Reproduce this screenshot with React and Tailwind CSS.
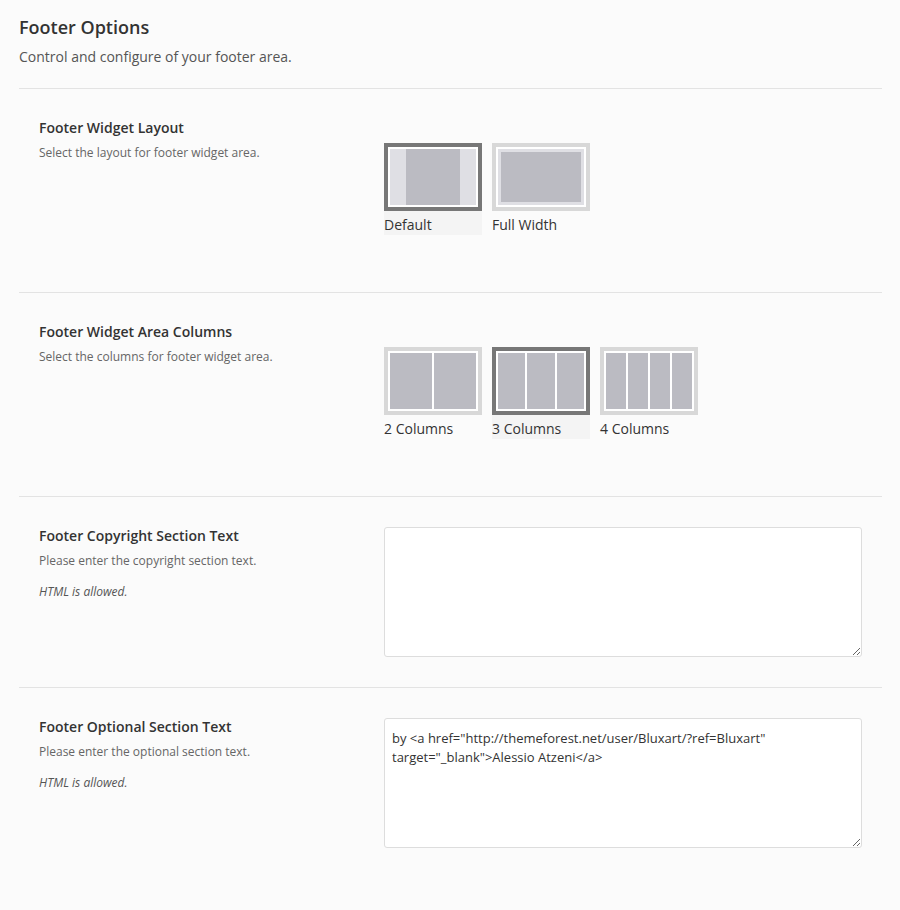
import React from "react"

const font = "font-['Open_Sans','Liberation_Sans',sans-serif]"

function LayoutDefault() {
    return (
        <div className="flex h-full w-full">
            <div className="w-[16px] bg-[#dfdfe4]" />
            <div className="flex-1 bg-[#bbbbc2]" />
            <div className="w-[16px] bg-[#dfdfe4]" />
        </div>
    )
}

function LayoutFull() {
    return (
        <div className="h-full w-full bg-[#dfdfe4] p-[3px]">
            <div className="h-full w-full bg-[#bbbbc2]" />
        </div>
    )
}

function Cols({ n }) {
    return (
        <div className="flex h-full w-full gap-[2px]">
            {Array.from({ length: n }).map((_, i) => (
                <div key={i} className="flex-1 bg-[#bbbbc2]" />
            ))}
        </div>
    )
}

function ImageOption({ label, selected, children }) {
    return (
        <div className="w-[98px]">
            <div className={`h-[68px] w-[98px] border-4 bg-white p-[2px] ${selected ? 'border-[#777777]' : 'border-[#d8d8d8]'}`}>
                {children}
            </div>
            <div className={`h-[24px] text-[14px] leading-[27px] text-[#333] ${selected ? 'bg-[#f4f4f4]' : ''}`}>
                {label}
            </div>
        </div>
    )
}

function Section({ title, desc, note, children, last }) {
    return (
        <div className={`flex px-[20px] py-[30px] ${last ? '' : 'border-b border-[#e3e3e3]'}`}>
            <div className="w-[345px] shrink-0">
                <h3 className="text-[14px] font-semibold leading-[18px] text-[#333]">{title}</h3>
                <p className="mt-[7px] text-[12px] leading-[18px] text-[#666]">{desc}</p>
                {note && <p className="mt-[13px] text-[12px] italic leading-[18px] text-[#555]">{note}</p>}
            </div>
            <div className="flex-1">{children}</div>
        </div>
    )
}

function TextBox({ value }) {
    return (
        <textarea
            defaultValue={value}
            className={`block h-[130px] w-full resize-y rounded-[3px] border border-[#dddddd] bg-white px-[7px] py-[10px] text-[13px] leading-[19px] text-[#333] outline-none ${font}`}
        />
    )
}

export default function App() {
    return (
        <div className={`min-h-screen bg-[#fbfbfb] ${font} text-[#333]`}>
            <div className="ml-[19px] w-[863px] pt-[16px]">
                <div className="border-b border-[#e3e3e3] pb-[21px]">
                    <h2 className="text-[18px] font-semibold leading-[22px] text-[#333]">Footer Options</h2>
                    <p className="mt-[9px] text-[14px] leading-[20px] text-[#555]">Control and configure of your footer area.</p>
                </div>

                <Section title="Footer Widget Layout" desc="Select the layout for footer widget area.">
                    <div className="flex gap-[10px] pt-[24px] pb-[27px]">
                        <ImageOption label="Default" selected>
                            <LayoutDefault />
                        </ImageOption>
                        <ImageOption label="Full Width">
                            <LayoutFull />
                        </ImageOption>
                    </div>
                </Section>

                <Section title="Footer Widget Area Columns" desc="Select the columns for footer widget area.">
                    <div className="flex gap-[10px] pt-[24px] pb-[27px]">
                        <ImageOption label="2 Columns">
                            <Cols n={2} />
                        </ImageOption>
                        <ImageOption label="3 Columns" selected>
                            <Cols n={3} />
                        </ImageOption>
                        <ImageOption label="4 Columns">
                            <Cols n={4} />
                        </ImageOption>
                    </div>
                </Section>

                <Section
                    title="Footer Copyright Section Text"
                    desc="Please enter the copyright section text."
                    note="HTML is allowed."
                >
                    <TextBox value="" />
                </Section>

                <Section
                    title="Footer Optional Section Text"
                    desc="Please enter the optional section text."
                    note="HTML is allowed."
                    last
                >
                    <TextBox value={'by <a href="http://themeforest.net/user/Bluxart/?ref=Bluxart" target="_blank">Alessio Atzeni</a>'} />
                </Section>
            </div>
        </div>
    )
}
